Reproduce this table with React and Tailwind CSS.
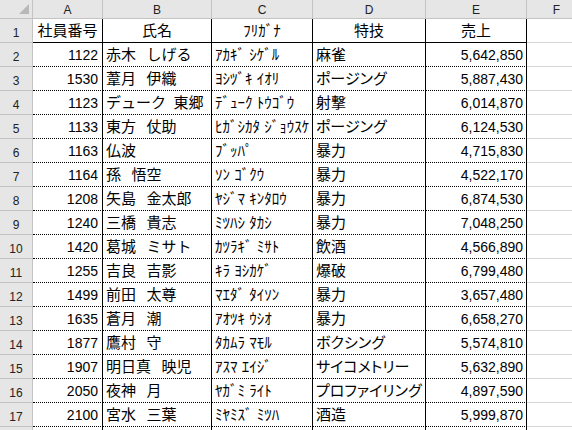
import React from "react";

const S = "\u2002\u2009";

const rows = [
  ["1122", `赤木${S}しげる`, "ｱｶｷﾞ ｼｹﾞﾙ", "麻雀", "5,642,850"],
  ["1530", `葦月${S}伊織`, "ﾖｼﾂﾞｷ ｲｵﾘ", "ポージング", "5,887,430"],
  ["1123", "デューク\u2002東郷", "ﾃﾞｭｰｸ ﾄｳｺﾞｳ", "射撃", "6,014,870"],
  ["1133", `東方${S}仗助`, "ﾋｶﾞｼｶﾀ ｼﾞｮｳｽｹ", "ポージング", "6,124,530"],
  ["1163", "仏波", "ﾌﾞｯﾊﾟ", "暴力", "4,715,830"],
  ["1164", `孫${S}悟空`, "ｿﾝ ｺﾞｸｳ", "暴力", "4,522,170"],
  ["1208", `矢島${S}金太郎`, "ﾔｼﾞﾏ ｷﾝﾀﾛｳ", "暴力", "6,874,530"],
  ["1240", `三橋${S}貴志`, "ﾐﾂﾊｼ ﾀｶｼ", "暴力", "7,048,250"],
  ["1420", `葛城${S}ミサト`, "ｶﾂﾗｷﾞ ﾐｻﾄ", "飲酒", "4,566,890"],
  ["1255", `吉良${S}吉影`, "ｷﾗ ﾖｼｶｹﾞ", "爆破", "6,799,480"],
  ["1499", `前田${S}太尊`, "ﾏｴﾀﾞ ﾀｲｿﾝ", "暴力", "3,657,480"],
  ["1635", `蒼月${S}潮`, "ｱｵﾂｷ ｳｼｵ", "暴力", "6,658,270"],
  ["1877", `鷹村${S}守`, "ﾀｶﾑﾗ ﾏﾓﾙ", "ボクシング", "5,574,810"],
  ["1907", `明日真${S}映児`, "ｱｽﾏ ｴｲｼﾞ", "サイコメトリー", "5,632,890"],
  ["2050", `夜神${S}月`, "ﾔｶﾞﾐ ﾗｲﾄ", "プロファイリング", "4,897,590"],
  ["2100", `宮水${S}三葉`, "ﾐﾔﾐｽﾞ ﾐﾂﾊ", "酒造", "5,999,870"],
];

const colLetters = ["A", "B", "C", "D", "E", "F"];

function ColHeader({ children }) {
  return (
    <div className="h-[19px] bg-[#e6e6e6] border-r border-b border-[#c3c3c3] flex items-end justify-center pb-[1px] text-[12px] leading-[14px] text-[#222]">
      {children}
    </div>
  );
}

function RowHeader({ children }) {
  return (
    <div className="h-[24px] bg-[#e6e6e6] border-r border-b border-[#c3c3c3] flex items-end justify-center pb-[2px] text-[12px] leading-[14px] text-[#222]">
      {children}
    </div>
  );
}

const cellBase =
  "h-[24px] border-r border-b border-black [border-bottom-style:dotted] flex items-end pb-[2px] leading-[18px] whitespace-pre overflow-hidden";

export default function App() {
  return (
    <div className="w-[572px] h-[430px] overflow-hidden bg-white font-['Liberation_Sans','Noto_Sans_CJK_JP',sans-serif] text-black">
      <div className="grid grid-cols-[33px_70px_109px_101px_113px_101px_60px]">
        <div className="h-[19px] bg-[#e6e6e6] border-r border-b border-[#c3c3c3] flex items-end justify-end pr-[3px] pb-[4px]">
          <svg width="10" height="10" viewBox="0 0 10 10">
            <polygon points="10,0 10,10 0,10" fill="#b8b8b8" />
          </svg>
        </div>
        {colLetters.map((l) => (
          <ColHeader key={l}>{l}</ColHeader>
        ))}

        <RowHeader>1</RowHeader>
        {["社員番号", "氏名", "ﾌﾘｶﾞﾅ", "特技", "売上"].map((t) => (
          <div
            key={t}
            className="h-[24px] border-r border-b border-black flex items-end justify-center pb-[2px] text-[15px] leading-[18px] whitespace-nowrap overflow-hidden"
          >
            {t}
          </div>
        ))}
        <div className="h-[24px] border-r border-b border-[#d4d4d4]" />

        {rows.map((r, i) => (
          <React.Fragment key={i}>
            <RowHeader>{i + 2}</RowHeader>
            <div className={`${cellBase} justify-end pr-[4px] text-[14px]`}>{r[0]}</div>
            <div className={`${cellBase} pl-[3px] text-[15px]`}>{r[1]}</div>
            <div className={`${cellBase} pl-[3px] text-[15px]`}>{r[2]}</div>
            <div className={`${cellBase} pl-[3px] text-[15px] [font-feature-settings:'palt']`}>{r[3]}</div>
            <div className={`${cellBase} justify-end pr-[3px] text-[14px]`}>{r[4]}</div>
            <div className="h-[24px] border-r border-b border-[#d4d4d4]" />
          </React.Fragment>
        ))}

        <div className="h-[24px] bg-[#e6e6e6] border-r border-b border-[#c3c3c3]" />
        <div className={cellBase} />
        <div className={cellBase} />
        <div className={cellBase} />
        <div className={cellBase} />
        <div className={cellBase} />
        <div className="h-[24px] border-r border-b border-[#d4d4d4]" />
      </div>
    </div>
  );
}
